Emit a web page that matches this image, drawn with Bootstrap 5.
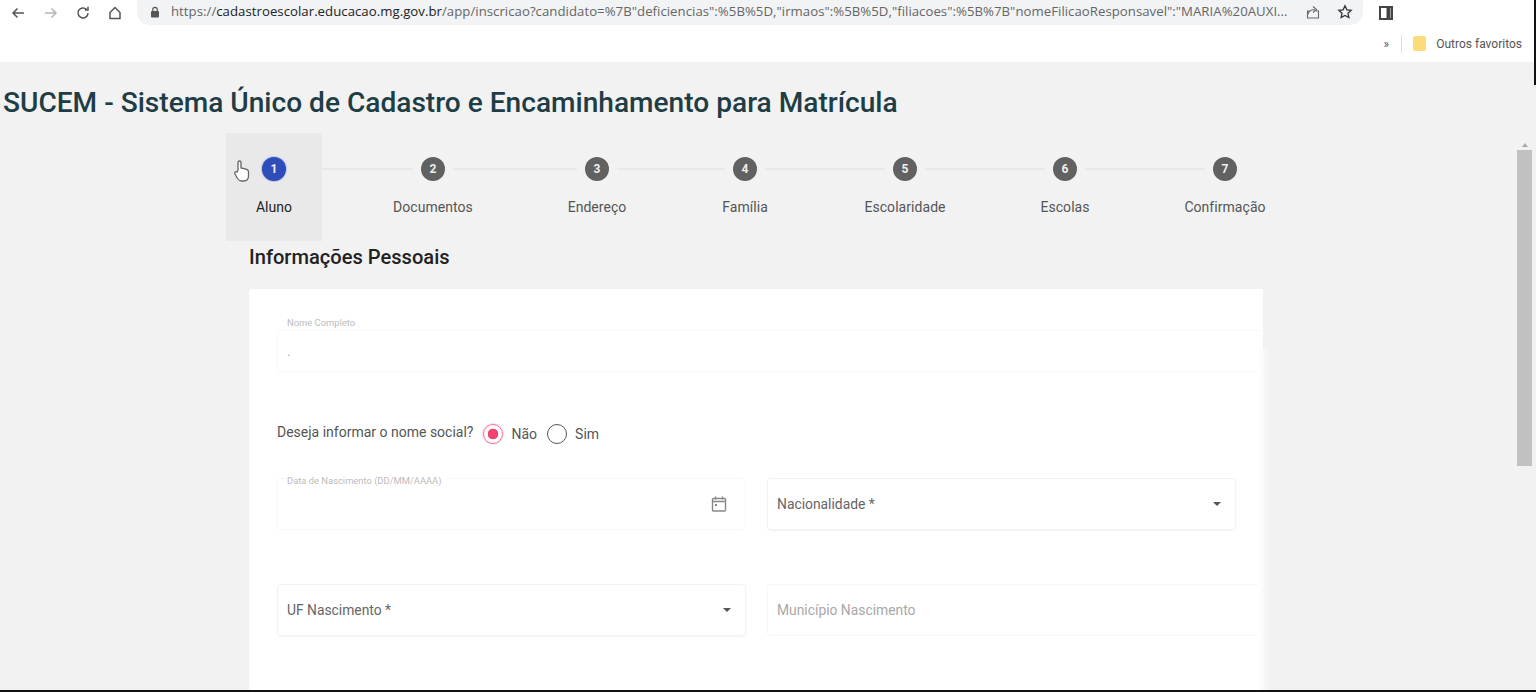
<!DOCTYPE html>
<html lang="pt-BR">
<head>
<meta charset="utf-8">
<title>SUCEM</title>
<link href="https://cdn.jsdelivr.net/npm/bootstrap@5.3.0/dist/css/bootstrap.min.css" rel="stylesheet">
<style>
html,body{height:694px;overflow:hidden;background:#fff}
body{font-family:Roboto,"Liberation Sans",sans-serif;font-size:14px;color:#444}
.shot{height:692px;border-bottom:2px solid #111;overflow:hidden;position:relative}
.chrome-bar{height:62px;background:#fff;box-shadow:0 1px 2px rgba(0,0,0,.06)}
.tool-row{height:25px;padding-left:3px}
.tool-ico{width:32px;flex:none;text-align:center;line-height:0}
.tool-back{margin-left:-1px;margin-right:1px}
.url-pill{width:1226px;height:25px;background:#f1f3f4;border-radius:0 0 13px 13px;margin-left:6px;padding:0 10px 2px 13px}
.url-text{font-family:"Open Sans","Liberation Sans",sans-serif;font-size:13.2px;color:#666;white-space:nowrap;letter-spacing:.035px;margin:0 0 0 11px;width:1124px;overflow:hidden}
.url-text b{font-weight:400;color:#222}
.fav-row{height:37px;padding:0 14px 0 0;font-size:12px;color:#555}
.vert-sep{width:1px;height:18px;background:#ddd;margin:0 11px 0 12px}
.fav-folder{width:13px;height:15px;background:#fbdb7a;border-radius:2px;margin-right:10px}
.edge-line{position:absolute;right:0;top:0;width:2px;height:85px;background:#111}
.page-main{height:630px;background:#f2f2f2}
.page-body{flex:1;min-width:0;padding:27px 0 0 3px}
.page-title{font-size:28.1px;font-weight:500;color:#1e3d45;line-height:28px;margin:0 0 16px;white-space:nowrap}
.wizard{width:1060px;margin-left:223px}
.stepper{padding:24px 0 0 36px;height:112px;align-items:flex-start;isolation:isolate}
.stp{width:24px;flex:none;position:relative;display:flex;flex-direction:column;align-items:center}
.stp-first::before{content:"";position:absolute;z-index:-1;left:-36px;top:-24px;width:96px;height:108px;background:#e9e9e9}
.stp-num{width:24px;height:24px;flex:none;border-radius:50%;background:#616161;color:#eee;font-size:12px;font-weight:700;display:flex;align-items:center;justify-content:center}
.stp-on{background:#2f4db8;box-shadow:0 0 0 1px #b9c4ee}
.stp-lbl{margin-top:16px;white-space:nowrap;color:#555;font-size:14px;letter-spacing:.05px;line-height:20px}
.stp-first .stp-lbl{color:#222}
.stp-line{height:2px;background:#e8e8e8;margin:11px 8px 0}
.w-a{width:119px}.w-b{width:124px}.w-c{width:108px}.w-d{width:120px}
.sect-title{font-size:20.1px;font-weight:500;color:#222;line-height:24px;margin:0 0 20px 23px}
.form-sheet{margin-left:23px;width:1014px;height:420px;background:#fff;border-radius:4px 0 0 0;position:relative;padding:33px 0 0 28px}
.form-sheet::after{content:"";position:absolute;right:-7px;top:60px;bottom:0;width:12px;background:linear-gradient(90deg,#fff,#f2f2f2)}
.fld{height:52px;border:1px solid #f3f3f3;border-radius:4px;position:relative;padding:0 9px;display:flex;align-items:center;justify-content:space-between;color:#666;font-size:13.85px}
.fld-half{width:469px;flex:none;box-shadow:0 1px 2px rgba(0,0,0,.05)}
.fld-pale{border-color:#f8f8f8;box-shadow:none}
.fld-open{flex:1;border-right:0;border-radius:4px 0 0 4px;border-color:#f7f7f7;box-shadow:none;color:#a8a8a8}
.fld-top{height:42px;margin:8px 0 0;border-color:#f9f9f9;box-shadow:none;border-right:0;color:#aaa;justify-content:flex-start}
.float-lbl{position:absolute;left:9px;top:-14px;font-size:9.4px;line-height:12px;color:#bbb;white-space:nowrap;background:#fff}
.float-near{top:-4px;padding-right:4px}
.caret-dn{width:0;height:0;border-left:4px solid transparent;border-right:4px solid transparent;border-top:4px solid #555;margin-right:5px}
.social-row{margin:50px 0 32px;height:24px}
.social-q{color:#555;font-size:14px;margin:0 10px 3px 0}
.radio-pick.form-check-input{width:20px;height:20px;margin:0;flex:none;border:1.5px solid #555;background:#fff;float:none}
.radio-pick.form-check-input:checked{border-color:#f4769a;background-color:#fff;background-image:radial-gradient(circle,#f0436d 0 5px,#fff 5.6px);box-shadow:0 0 0 1px #fde3ea}
.radio-txt{color:#555;font-size:14px;margin:0 10px 0 8px}
.f-row{gap:21px}
.f-row + .f-row{margin-top:54px}
.scroll-rail{width:19px;padding-right:4px;flex:none}
.scroll-up{height:0;width:0;border-left:3px solid transparent;border-right:3px solid transparent;border-bottom:4px solid #aaa;margin:81px auto 3px}
.scroll-thumb{width:15px;height:316px;background:#c1c1c1}
.hand{position:absolute;left:233px;top:159px}
</style>
</head>
<body>
<div class="shot">
  <div class="chrome-bar">
    <div class="tool-row d-flex align-items-center">
      <span class="tool-ico tool-back"><svg width="16" height="16" viewBox="0 0 16 16" fill="none" stroke="#555" stroke-width="1.5"><path d="M14 8H3M7.5 3.5 3 8l4.500 4.500"/></svg></span>
      <span class="tool-ico"><svg width="16" height="16" viewBox="0 0 16 16" fill="none" stroke="#b5b5b5" stroke-width="1.500"><path d="M2 8h11M8.500 3.500 13 8l-4.500 4.500"/></svg></span>
      <span class="tool-ico"><svg width="16" height="16" viewBox="0 0 16 16" fill="none" stroke="#555" stroke-width="1.500"><path d="M13 8a5 5 0 1 1-1.500-3.600M13 1.800v3.200H9.800"/></svg></span>
      <span class="tool-ico"><svg width="16" height="16" viewBox="0 0 16 16" fill="none" stroke="#555" stroke-width="1.500"><path d="M8 2.500 3 7.500V13.500h10V7.500z"/></svg></span>
      <div class="url-pill d-flex align-items-center">
        <svg width="10" height="12" viewBox="0 0 10 12" fill="#555"><rect x="1" y="5" width="8" height="6.500" rx="1"/><path d="M2.800 5V3.500a2.200 2.200 0 0 1 4.400 0V5" fill="none" stroke="#555" stroke-width="1.200"/></svg>
        <p class="url-text">https://<b>cadastroescolar.educacao.mg.gov.br</b>/app/inscricao?candidato=%7B"deficiencias":%5B%5D,"irmaos":%5B%5D,"filiacoes":%5B%7B"nomeFilicaoResponsavel":"MARIA%20AUXI...</p>
        <svg class="ms-auto" width="16" height="16" viewBox="0 0 16 16" fill="none" stroke="#666" stroke-width="1.100"><path d="M5 7H2.500v7h11V7H11M3 10c1-3 3-4.500 7-4.500M8 2.500l3.500 3-3.500 3"/></svg>
        <svg class="ms-3" width="16" height="16" viewBox="0 0 16 16" fill="none" stroke="#333" stroke-width="1.300"><path d="m8 1.800 1.900 4 4.300.5-3.200 3 .9 4.300L8 11.500l-3.900 2.100.9-4.300-3.200-3 4.300-.5z"/></svg>
      </div>
      <svg class="ms-3" width="14" height="14" viewBox="0 0 14 14" fill="none" stroke="#444" stroke-width="2"><rect x="1" y="1" width="12" height="12"/><path d="M9.500 1v12" stroke-width="4"/></svg>
    </div>
    <div class="fav-row d-flex align-items-center justify-content-end">
      <span>»</span><span class="vert-sep"></span>
      <span class="fav-folder"></span>
      <span>Outros favoritos</span>
    </div>
  </div>
  <div class="page-main d-flex">
    <div class="page-body">
      <h1 class="page-title">SUCEM - Sistema Único de Cadastro e Encaminhamento para Matrícula</h1>
      <div class="wizard">
        <div class="stepper d-flex">
          <div class="stp stp-first"><span class="stp-num stp-on">1</span><span class="stp-lbl">Aluno</span></div>
          <span class="stp-line w-a"></span>
          <div class="stp"><span class="stp-num">2</span><span class="stp-lbl">Documentos</span></div>
          <span class="stp-line w-b"></span>
          <div class="stp"><span class="stp-num">3</span><span class="stp-lbl">Endereço</span></div>
          <span class="stp-line w-c"></span>
          <div class="stp"><span class="stp-num">4</span><span class="stp-lbl">Família</span></div>
          <span class="stp-line w-d"></span>
          <div class="stp"><span class="stp-num">5</span><span class="stp-lbl">Escolaridade</span></div>
          <span class="stp-line w-d"></span>
          <div class="stp"><span class="stp-num">6</span><span class="stp-lbl">Escolas</span></div>
          <span class="stp-line w-d"></span>
          <div class="stp"><span class="stp-num">7</span><span class="stp-lbl">Confirmação</span></div>
        </div>
        <h2 class="sect-title">Informações Pessoais</h2>
        <div class="form-sheet">
          <div class="fld fld-top"><span class="float-lbl">Nome Completo</span><span>.</span></div>
          <div class="social-row d-flex align-items-center">
            <span class="social-q">Deseja informar o nome social?</span>
            <input class="form-check-input radio-pick" type="radio" name="social" checked aria-label="Não">
            <span class="radio-txt">Não</span>
            <input class="form-check-input radio-pick" type="radio" name="social" aria-label="Sim">
            <span class="radio-txt">Sim</span>
          </div>
          <div class="f-row d-flex">
            <div class="fld fld-half fld-pale"><span class="float-lbl float-near">Data de Nascimento (DD/MM/AAAA)</span>
              <svg class="ms-auto me-2" width="18" height="18" viewBox="0 0 18 18" fill="none" stroke="#888" stroke-width="1.400"><rect x="2.500" y="3.500" width="13" height="12.500" rx="1"/><path d="M2.500 6.500h13M5.500 1.500v3M12.500 1.500v3"/><rect x="5" y="9" width="2" height="2" fill="#888" stroke="none"/></svg>
            </div>
            <div class="fld fld-half"><span>Nacionalidade *</span><span class="caret-dn"></span></div>
          </div>
          <div class="f-row d-flex">
            <div class="fld fld-half"><span>UF Nascimento *</span><span class="caret-dn"></span></div>
            <div class="fld fld-open"><span>Município Nascimento</span></div>
          </div>
        </div>
      </div>
    </div>
    <div class="scroll-rail"><div class="scroll-up"></div><div class="scroll-thumb"></div></div>
  </div>
  <svg class="hand" width="18" height="24" viewBox="0 0 18 24" fill="#fff" stroke="#666" stroke-width="1.300"><path d="M5 11V3.500a1.500 1.500 0 0 1 3 0V9l5 1.200c1.500.4 2.500 1.300 2.500 3V17c0 3-2 5-5 5H8.500c-2 0-3-1-4-2.500L2 15c-1-1.500.8-3 2-2z"/></svg>
  <span class="edge-line"></span>
</div>
<script src="https://cdn.jsdelivr.net/npm/bootstrap@5.3.0/dist/js/bootstrap.bundle.min.js"></script>
</body>
</html>
